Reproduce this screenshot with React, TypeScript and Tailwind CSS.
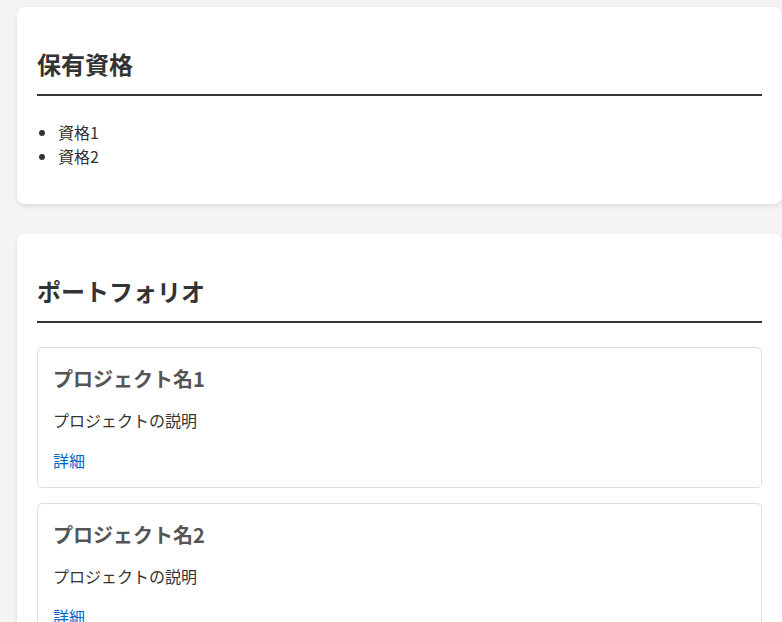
import React from "react";

const font = { fontFamily: '"Noto Sans CJK JP", "Noto Sans", sans-serif' };

function Project({ name }: { name: string }) {
  return (
    <div className="border border-[#dddddd] rounded-[5px] px-[15px] pt-[16px] pb-[15px]">
      <h3 className="m-0 mb-[14px] text-[20px] leading-[30px] font-bold text-[#555555]">{name}</h3>
      <p className="m-0 mb-[16px] text-[16px] leading-[24px] text-[#333333]">プロジェクトの説明</p>
      <a href="#" className="block text-[16px] leading-[24px] text-[#0066cc] no-underline">詳細</a>
    </div>
  );
}

export default function App() {
  return (
    <div className="min-h-[622px] bg-[#f4f4f4] pl-[17px] pt-[7px] text-[#333333]" style={font}>
      <section className="bg-white rounded-[8px] shadow-[0_2px_5px_rgba(0,0,0,0.1)] px-[20px] pt-[20px] pb-[20px] mb-[30px]">
        <h2 className="mt-[19px] mb-[24px] text-[24px] leading-[36px] font-bold pb-[12px] border-b-2 border-[#333333]">保有資格</h2>
        <ul className="list-disc pl-[21px] mb-[16px] text-[16px] leading-[24px]">
          <li>資格1</li>
          <li>資格2</li>
        </ul>
      </section>
      <section className="bg-white rounded-[8px] shadow-[0_2px_5px_rgba(0,0,0,0.1)] px-[20px] pt-[20px] pb-[20px]">
        <h2 className="mt-[19px] mb-[24px] text-[24px] leading-[36px] font-bold pb-[12px] border-b-2 border-[#333333]">ポートフォリオ</h2>
        <div className="flex flex-col gap-[15px]">
          <Project name="プロジェクト名1" />
          <Project name="プロジェクト名2" />
        </div>
      </section>
    </div>
  );
}
